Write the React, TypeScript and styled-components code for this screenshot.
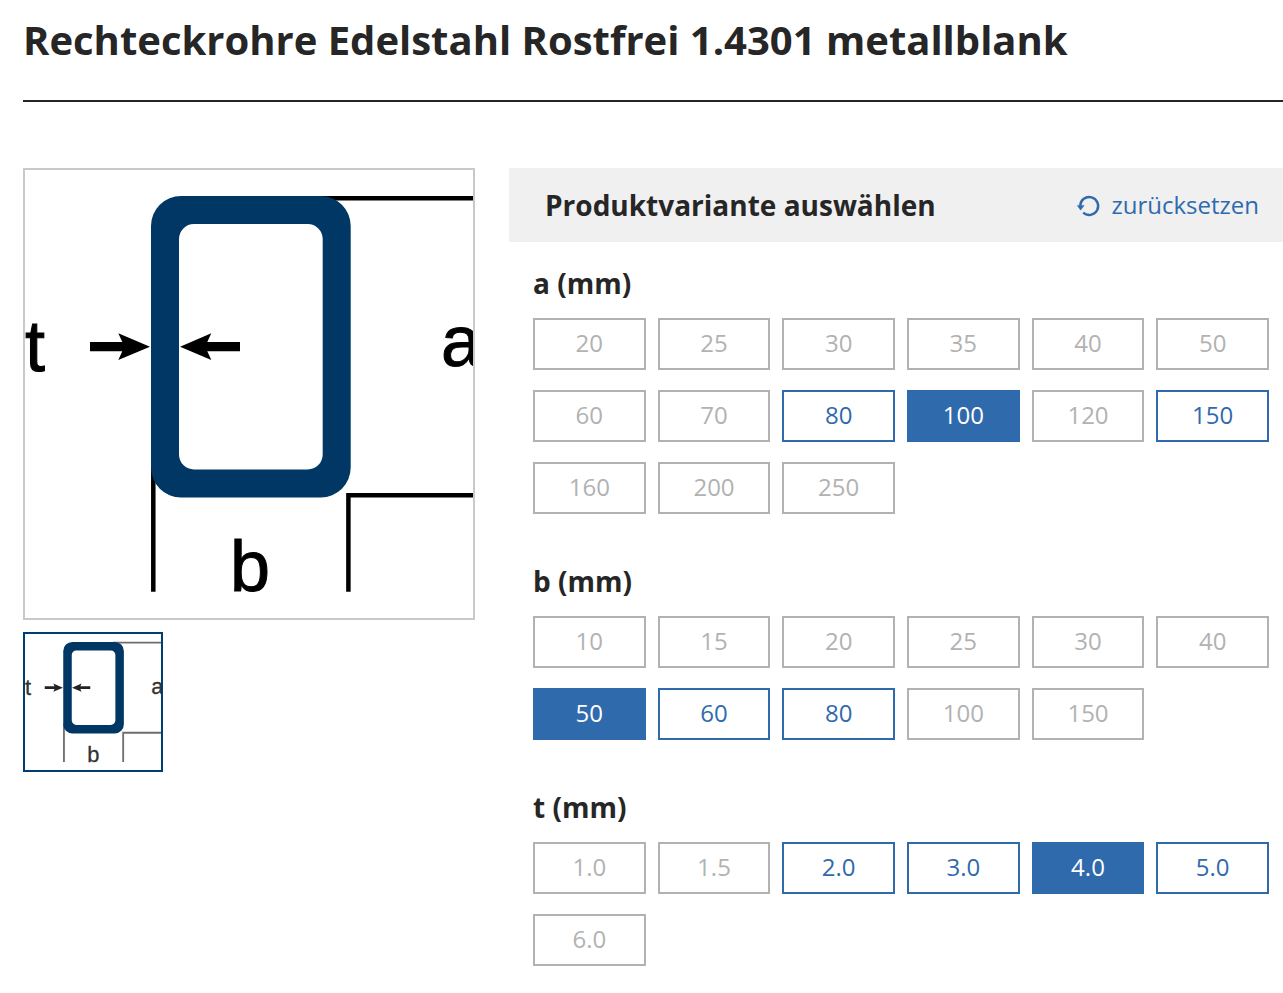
import { useState } from "react";
import styled, { createGlobalStyle } from "styled-components";

const GlobalStyle = createGlobalStyle`
  * { box-sizing: border-box; }
  body {
    margin: 0;
    background: #fff;
    color: #262626;
    font-family: "Open Sans", "Noto Sans", sans-serif;
  }
`;

const Page = styled.main`
  padding: 13px 0 28px 23px;
`;

const Title = styled.h1`
  margin: 0 0 66px;
  padding-bottom: 33px;
  border-bottom: 2px solid #262626;
  font-size: 40px;
  line-height: 54px;
  font-weight: 700;
`;

const Product = styled.div`
  display: grid;
  grid-template-columns: minmax(0, 452fr) minmax(0, 774fr);
  align-items: start;
  gap: 34px;
`;

const Gallery = styled.section`
  display: flex;
  flex-direction: column;
  align-items: flex-start;
  gap: 12px;
`;

const MainImage = styled.div`
  width: 100%;
  aspect-ratio: 1;
  border: 2px solid #c9c9c6;
`;

const Thumbnail = styled.button`
  width: 140px;
  height: 140px;
  padding: 0;
  border: 2px solid #003d73;
  background: #fff;
  cursor: pointer;
`;

const Drawing = styled.svg`
  display: block;
  width: 100%;
  height: 100%;
  overflow: hidden;
`;

const DrawingLabel = styled.text<{ $preview?: boolean }>`
  font-family: "Liberation Sans", sans-serif;
  font-size: 72px;
  fill: ${(p) => (p.$preview ? "#333" : "#000")};
  stroke: ${(p) => (p.$preview ? "#333" : "#000")};
  stroke-width: 1;
`;

const Configurator = styled.section`
  min-width: 0;
`;

const ConfigHeader = styled.header`
  display: flex;
  align-items: center;
  justify-content: space-between;
  min-height: 74px;
  padding: 0 24px 0 36px;
  background: #f0f0f0;
`;

const ConfigTitle = styled.h2`
  margin: 0;
  font-size: 28px;
  line-height: 38px;
  font-weight: 700;
`;

const ResetButton = styled.button`
  display: flex;
  align-items: center;
  gap: 10px;
  padding: 0;
  border: 0;
  background: none;
  color: #2f6aad;
  font: inherit;
  font-size: 24px;
  line-height: 34px;
  cursor: pointer;
`;

const Groups = styled.div`
  display: flex;
  flex-direction: column;
  gap: 48px;
  padding: 22px 14px 0 24px;
`;

const GroupTitle = styled.h3`
  margin: 0 0 16px;
  font-size: 28px;
  line-height: 38px;
  font-weight: 700;
`;

const Options = styled.div`
  display: grid;
  grid-template-columns: repeat(6, minmax(0, 1fr));
  gap: 20px 12px;
`;

const Option = styled.button<{ $selected: boolean }>`
  height: 52px;
  padding: 0 0 2px;
  border: 2px solid #2f6aad;
  border-radius: 0;
  background: ${(p) => (p.$selected ? "#2f6aad" : "#fff")};
  color: ${(p) => (p.$selected ? "#fff" : "#2f6aad")};
  font: inherit;
  font-size: 24px;
  line-height: 34px;
  cursor: pointer;

  &:disabled {
    border-color: #b2b2b2;
    color: #b2b2b2;
    cursor: default;
  }
`;

interface Dimension {
  name: string;
  values: string[];
  available: string[];
  initial: string;
}

const dimensions: Dimension[] = [
  {
    name: "a",
    values: ["20", "25", "30", "35", "40", "50", "60", "70", "80", "100", "120", "150", "160", "200", "250"],
    available: ["80", "100", "150"],
    initial: "100",
  },
  {
    name: "b",
    values: ["10", "15", "20", "25", "30", "40", "50", "60", "80", "100", "150"],
    available: ["50", "60", "80"],
    initial: "50",
  },
  {
    name: "t",
    values: ["1.0", "1.5", "2.0", "3.0", "4.0", "5.0", "6.0"],
    available: ["2.0", "3.0", "4.0", "5.0"],
    initial: "4.0",
  },
];

const initialSelection: Record<string, string> = Object.fromEntries(
  dimensions.map((d) => [d.name, d.initial]),
);

function TubeDrawing({ preview }: { preview?: boolean }) {
  return (
    <Drawing viewBox="0 0 448 448" role="img" aria-label="Rechteckrohr">
      <path
        d="M290 28.2H448M128.3 295V421.7M323.4 421.7V325.3H448"
        fill="none"
        stroke={preview ? "#6e6e6e" : "#000"}
        strokeWidth={preview ? 6 : 4.5}
      />
      <rect x="140" y="40" width="171.6" height="273.5" rx="16" fill="#fff" />
      <path
        fill="#003764"
        fillRule="evenodd"
        d="M156 26H295.7A30 30 0 0 1 325.7 56V297.5A30 30 0 0 1 295.7 327.5H156A30 30 0 0 1 126 297.5V56A30 30 0 0 1 156 26ZM169 54A15 15 0 0 0 154 69V284.5A15 15 0 0 0 169 299.5H282.7A15 15 0 0 0 297.7 284.5V69A15 15 0 0 0 282.7 54Z"
      />
      <g fill={preview ? "#222" : "#000"}>
        <path d="M65 172H97.3L93.3 163.3L125 176.7L93.3 190L97.3 181.3H65Z" />
        <path d="M215 172H182.3L186.3 163.3L155 176.7L186.3 190L182.3 181.3H215Z" />
      </g>
      <DrawingLabel x="0" y="201" $preview={preview}>t</DrawingLabel>
      <DrawingLabel x="416" y="196" $preview={preview}>a</DrawingLabel>
      <DrawingLabel x="205" y="421" $preview={preview}>b</DrawingLabel>
    </Drawing>
  );
}

function ResetIcon() {
  return (
    <svg width="24" height="24" viewBox="0 0 24 24" aria-hidden="true">
      <path d="M3.2 12.8A9 9 0 1 1 6.2 19.7" fill="none" stroke="currentColor" strokeWidth="2.4" />
      <path d="M0.2 12.4H7.2L3.6 17.2Z" fill="currentColor" stroke="currentColor" strokeWidth="0.4" />
    </svg>
  );
}

export default function App() {
  const [selection, setSelection] = useState(initialSelection);

  return (
    <>
      <GlobalStyle />
      <Page>
        <Title>Rechteckrohre Edelstahl Rostfrei 1.4301 metallblank</Title>
        <Product>
          <Gallery>
            <MainImage>
              <TubeDrawing />
            </MainImage>
            <Thumbnail type="button">
              <TubeDrawing preview />
            </Thumbnail>
          </Gallery>
          <Configurator>
            <ConfigHeader>
              <ConfigTitle>Produktvariante auswählen</ConfigTitle>
              <ResetButton type="button" onClick={() => setSelection(initialSelection)}>
                <ResetIcon />
                zurücksetzen
              </ResetButton>
            </ConfigHeader>
            <Groups>
              {dimensions.map((d) => (
                <section key={d.name}>
                  <GroupTitle id={`dim-${d.name}`}>{d.name} (mm)</GroupTitle>
                  <Options role="group" aria-labelledby={`dim-${d.name}`}>
                    {d.values.map((value) => (
                      <Option
                        key={value}
                        type="button"
                        disabled={!d.available.includes(value)}
                        aria-pressed={selection[d.name] === value}
                        $selected={selection[d.name] === value}
                        onClick={() => setSelection({ ...selection, [d.name]: value })}
                      >
                        {value}
                      </Option>
                    ))}
                  </Options>
                </section>
              ))}
            </Groups>
          </Configurator>
        </Product>
      </Page>
    </>
  );
}
